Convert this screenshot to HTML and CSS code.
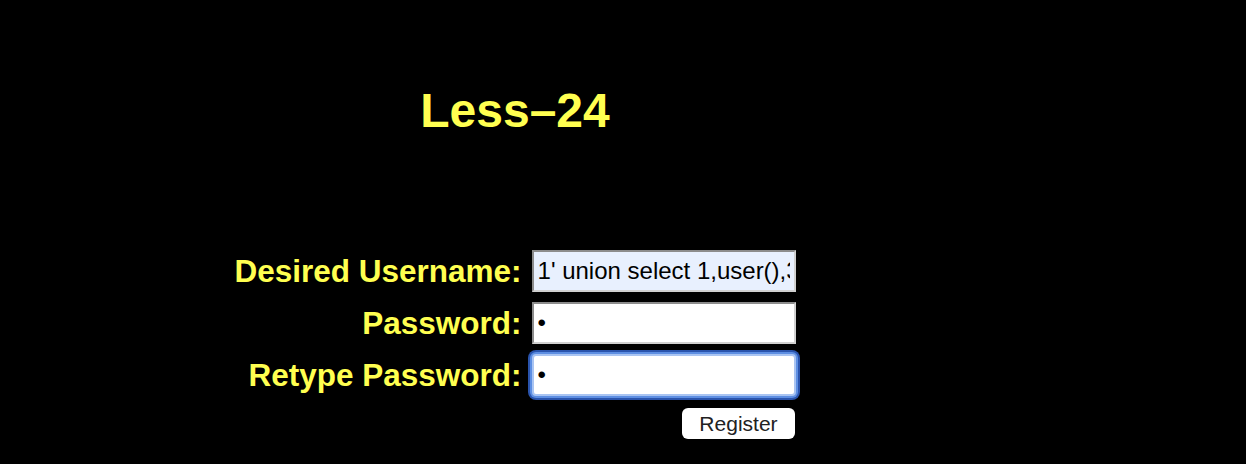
FILE: index.html
```html
<!DOCTYPE html>
<html lang="en">
<head>
  <meta charset="UTF-8" />
  <meta name="viewport" content="width=device-width, initial-scale=1.0"/>
  <title>Less-24</title>
  <link rel="stylesheet" href="styles.css">
</head>
<body>
  <div class="page">
    <h1 class="title">Less–24</h1>

    <!-- form daftar -->
    <form class="register" name="mylogin" method="POST" action="#">
      <label for="username">Desired Username:</label>
      <input type="text" id="username" class="field filled" value="1' union select 1,user(),3#">

      <label for="password">Password:</label>
      <input type="password" id="password" class="field" value="1">

      <label for="re_password">Retype Password:</label>
      <input type="password" id="re_password" class="field focused" value="1">

      <div class="actions">
        <button type="submit" class="btn">Register</button>
      </div>
    </form>
  </div>
</body>
</html>
```

FILE: styles.css
```css
body {
  margin: 0;
  padding: 0;
  background: #000;
  font-family: "Liberation Sans", Arial, Helvetica, sans-serif;
}
.page {
  width: 1030px;
  padding-top: 83px;
  text-align: center;
}
.title {
  margin: 0;
  font-size: 48px;
  line-height: 56px;
  font-weight: bold;
  color: #ffff50;
}
.register {
  display: inline-grid;
  grid-template-columns: auto 264px;
  column-gap: 10px;
  row-gap: 10px;
  align-items: center;
  margin-top: 111px;
}
.register label {
  color: #ffff50;
  font-weight: bold;
  font-size: 31.5px;
  text-align: right;
}
.field {
  box-sizing: border-box;
  width: 264px;
  height: 42px;
  margin: 0;
  padding: 0 4px;
  font-family: "Liberation Sans", Arial, sans-serif;
  font-size: 24px;
  color: #000;
  background: #fff;
  border-width: 2px;
  border-style: solid;
  border-color: #8c8c8c #d0d0d0 #d0d0d0 #8c8c8c;
  outline: none;
}
.filled {
  background: #e8f0fe;
}
.focused {
  border-radius: 4px;
  border-color: #a9c4f2;
  box-shadow: 0 0 0 2px #5d8ee2, 0 0 0 4px #2a54ad;
}
.actions {
  grid-column: 2;
  text-align: right;
  margin-top: 2px;
  padding-right: 1px;
}
.btn {
  height: 31px;
  padding: 0 17px;
  font-family: "Liberation Sans", Arial, sans-serif;
  font-size: 21px;
  color: #222;
  background: #fff;
  border: none;
  border-radius: 6px;
  cursor: pointer;
}
```
